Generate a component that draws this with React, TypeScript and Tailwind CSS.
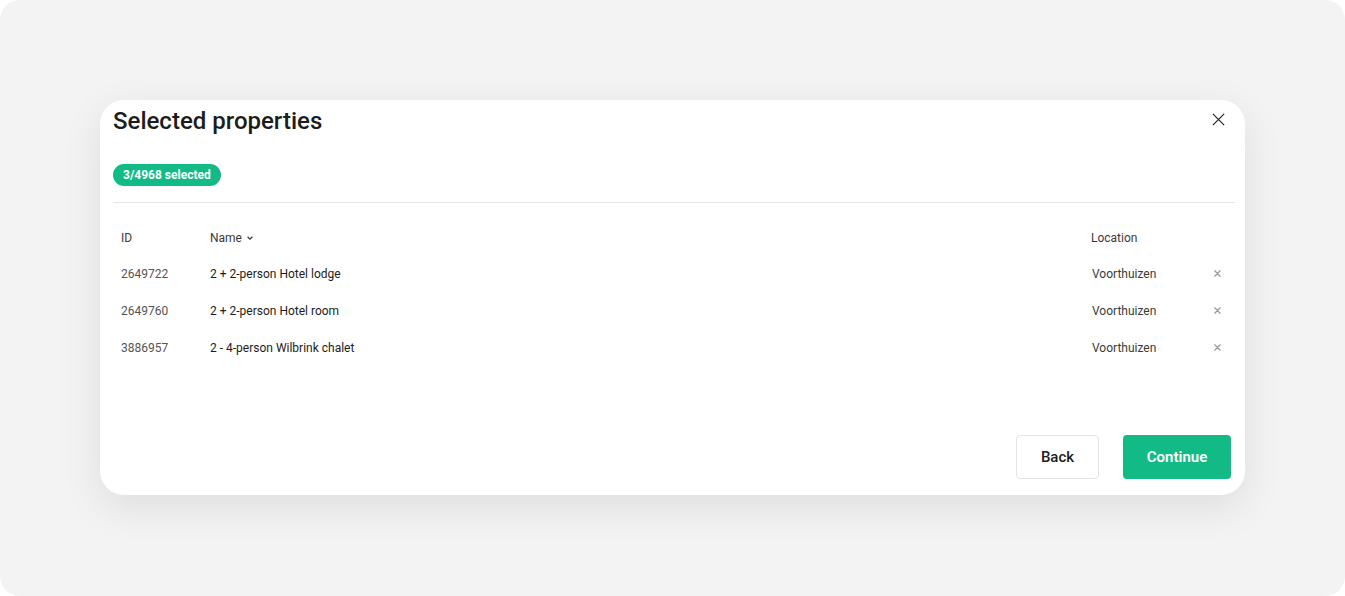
const rows = [
    { id: "2649722", name: "2 + 2-person Hotel lodge", location: "Voorthuizen" },
    { id: "2649760", name: "2 + 2-person Hotel room", location: "Voorthuizen" },
    { id: "3886957", name: "2 - 4-person Wilbrink chalet", location: "Voorthuizen" },
];

function SmallX({ className }: { className?: string }) {
    return (
        <svg viewBox="0 0 10 10" className={className} fill="none" stroke="currentColor" strokeWidth="1.4" strokeLinecap="round">
            <path d="M2 2l6 6M8 2l-6 6" />
        </svg>
    );
}

export default function App() {
    return (
        <div className="w-[1345px] h-[596px] bg-white" style={{ fontFamily: "Roboto, 'Liberation Sans', sans-serif" }}>
            <div className="h-full rounded-[20px] bg-[#f3f3f4] pt-[100px] px-[100px]">
                <div className="h-[395px] bg-white rounded-[24px] shadow-[0_12px_40px_rgba(0,0,0,0.09)] pl-[13px] pr-[10px] pt-[1px] flex flex-col">
                    <div className="flex items-start justify-between">
                        <h1 className="text-[24px] leading-[40px] font-medium text-[#1c1c1c]">Selected properties</h1>
                        <button className="mt-[11px] mr-[9px] text-[#222]">
                            <svg viewBox="0 0 16 16" className="w-[15px] h-[15px]" fill="none" stroke="currentColor" strokeWidth="1.3">
                                <path d="M2 2l12 12M14 2L2 14" />
                            </svg>
                        </button>
                    </div>
                    <div className="mt-[21px]">
                        <span className="inline-flex items-center h-[22px] px-[10px] rounded-full bg-[#12bb85] text-white text-[12px] font-bold">
                            3/4968 selected
                        </span>
                    </div>
                    <div className="mt-[16px] border-t border-[#e6e6e6]" />
                    <div className="mt-[17px] pl-[8px] text-[12px]">
                        <div className="flex items-center h-[35px] text-[#3a3a3a]">
                            <div className="w-[89px]">ID</div>
                            <div className="flex-1 flex items-center gap-[4px]">
                                Name
                                <svg viewBox="0 0 10 10" className="w-[8px] h-[8px]" fill="none" stroke="currentColor" strokeWidth="1.6">
                                    <path d="M2 3.5l3 3 3-3" />
                                </svg>
                            </div>
                            <div className="w-[144px]">Location</div>
                        </div>
                        {rows.map((r) => (
                            <div key={r.id} className="flex items-center h-[37px]">
                                <div className="w-[89px] text-[#555]">{r.id}</div>
                                <div className="flex-1 text-[#1c1c1c]">{r.name}</div>
                                <div className="w-[122px] pl-[1px] text-[#3a3a3a]">{r.location}</div>
                                <div className="w-[22px] flex">
                                    <SmallX className="w-[9px] h-[9px] text-[#9a9a9a]" />
                                </div>
                            </div>
                        ))}
                    </div>
                    <div className="mt-auto mb-[16px] flex justify-end gap-[24px] pr-[4px]">
                        <button className="h-[44px] w-[83px] rounded-[4px] border border-[#e3e3e3] bg-white text-[15px] font-medium text-[#1c1c1c]">
                            Back
                        </button>
                        <button className="h-[44px] w-[108px] rounded-[4px] bg-[#12bb85] text-[15px] font-semibold text-white">
                            Continue
                        </button>
                    </div>
                </div>
            </div>
        </div>
    );
}
